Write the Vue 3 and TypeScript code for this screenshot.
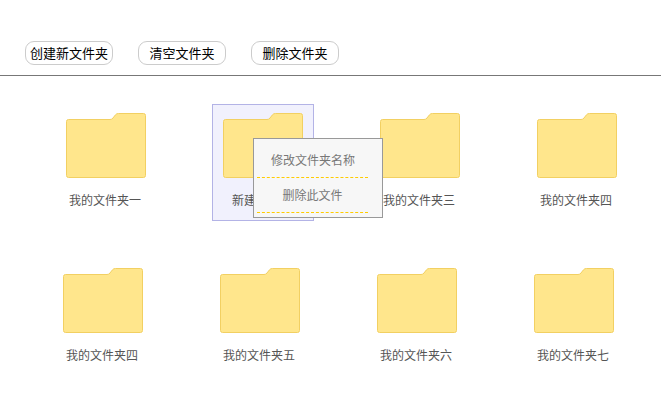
<template>
  <div class="page">
    <div class="toolbar">
      <button v-for="label in actions" :key="label" class="tool-btn">{{ label }}</button>
    </div>

    <div class="folder-area">
      <div v-for="(row, r) in rows" :key="r" class="folder-row" :class="{ shifted: r === 1 }">
        <div
          v-for="folder in row"
          :key="folder.id"
          class="folder"
          :class="{ selected: folder.id === selectedId }"
        >
          <svg class="folder-icon" width="80" height="65" viewBox="0 0 80 65">
            <path
              d="M2.5 6.5H44Q46 6.5 47 5L49.5 1.8Q50.5 .5 52.5 .5H77.5Q79.5 .5 79.5 2.5V62.5Q79.5 64.5 77.5 64.5H2.5Q.5 64.5 .5 62.5V8.5Q.5 6.5 2.5 6.5Z"
              fill="#ffe68c"
              stroke="#f2d062"
            />
          </svg>
          <div class="folder-name">{{ folder.name }}</div>
          <div v-if="folder.id === selectedId" class="context-menu">
            <div class="menu-item rename">修改文件夹名称</div>
            <div class="menu-item remove">删除此文件</div>
          </div>
        </div>
      </div>
    </div>
  </div>
</template>

<script setup lang="ts">
interface Folder {
  id: number
  name: string
}

const actions: string[] = ['创建新文件夹', '清空文件夹', '删除文件夹']

const rows: Folder[][] = [
  [
    { id: 1, name: '我的文件夹一' },
    { id: 2, name: '新建文件夹' },
    { id: 3, name: '我的文件夹三' },
    { id: 4, name: '我的文件夹四' },
  ],
  [
    { id: 5, name: '我的文件夹四' },
    { id: 6, name: '我的文件夹五' },
    { id: 7, name: '我的文件夹六' },
    { id: 8, name: '我的文件夹七' },
  ],
]

const selectedId = 2
</script>

<style>
html,
body {
  margin: 0;
  background: #fff;
}
</style>

<style scoped>
.page {
  width: 661px;
  height: 415px;
  overflow: hidden;
  font-family: "Noto Sans CJK SC", "Liberation Sans", sans-serif;
}

.toolbar {
  display: flex;
  gap: 25px;
  box-sizing: border-box;
  height: 76px;
  padding: 41px 0 0 25px;
  border-bottom: 1px solid #777;
}

.tool-btn {
  width: 88px;
  height: 24px;
  padding: 0;
  background: #fff;
  border: 1px solid #ccc;
  border-radius: 9px;
  font-family: inherit;
  font-size: 13px;
  line-height: 22px;
  color: #000;
}

.folder-area {
  padding-top: 28px;
}

.folder-row {
  display: flex;
  gap: 55px;
  padding-left: 55px;
  margin-bottom: 38px;
}

.folder-row.shifted {
  padding-left: 52px;
}

.folder {
  position: relative;
  width: 102px;
  height: 117px;
  box-sizing: border-box;
  padding: 8px 10px 0;
  border: 1px solid transparent;
}

.folder.selected {
  background: #f1f1fd;
  border-color: #b3b3e6;
}

.folder-icon {
  display: block;
}

.folder-name {
  width: 78px;
  margin-top: 13px;
  font-size: 12px;
  line-height: 18px;
  text-align: center;
  color: #555;
  white-space: nowrap;
}

.context-menu {
  position: absolute;
  left: 40px;
  top: 33px;
  width: 130px;
  height: 80px;
  box-sizing: border-box;
  background: #f7f7f7;
  border: 1px solid #999;
  z-index: 1;
}

.menu-item {
  width: 111px;
  margin-left: 3px;
  box-sizing: border-box;
  font-size: 12px;
  text-align: center;
  color: #777;
  border-bottom: 1px dashed #ffcc00;
}

.menu-item.rename {
  height: 39px;
  padding-left: 1px;
  line-height: 42px;
}

.menu-item.remove {
  height: 35px;
  line-height: 34px;
}
</style>
